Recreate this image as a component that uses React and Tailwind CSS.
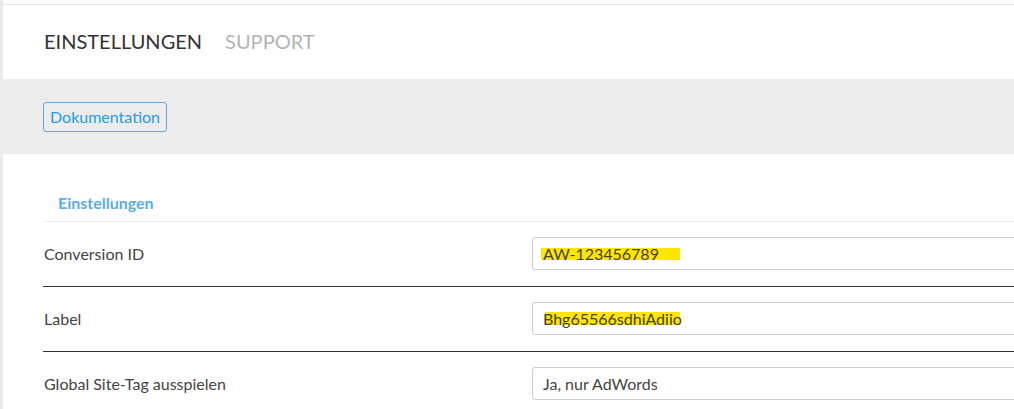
import React from "react";

const rows = [
  {
    label: "Conversion ID",
    value: "AW-123456789",
    mark: "left-[-2px] top-[3px] h-[12px] w-[139px]",
  },
  {
    label: "Label",
    value: "Bhg65566sdhiAdiio",
    mark: "left-[2px] top-[2px] h-[13px] w-[135px]",
  },
  { label: "Global Site-Tag ausspielen", value: "Ja, nur AdWords" },
];

const App = () => {
  return (
    <div
      className="w-full h-[409px] overflow-hidden bg-white flex"
      style={{ fontFamily: "Lato, 'Open Sans', sans-serif" }}
    >
      <div className="w-[3px] shrink-0 bg-[#ebebeb]" />
      <div className="flex-1 min-w-0">
        <div className="h-[4px] bg-white" />
        <div className="h-[1px] bg-[#e6e6e6]" />

        {/* tabs */}
        <div className="h-[74px] flex items-center pl-[41px] pb-[2px]">
          <span className="text-[20px] text-[#333]">EINSTELLUNGEN</span>
          <span className="ml-[23px] text-[20px] text-[#b3b3b3]">SUPPORT</span>
        </div>

        {/* toolbar */}
        <div className="h-[75px] bg-[#ececec] flex items-center pl-[40px]">
          <button className="h-[30px] px-[6px] rounded-[3px] border border-[#64a9de] text-[16px] text-[#239ee6] leading-none">
            Dokumentation
          </button>
        </div>

        {/* settings */}
        <div className="pl-[40px]">
          <div className="pt-[40px] pb-[9px] pl-[15px] border-b border-[#ebebeb]">
            <div className="text-[16px] leading-[18px] font-bold text-[#5aace6]">Einstellungen</div>
          </div>
          {rows.map((row, i) => (
            <div
              key={row.label}
              className={`h-[65px] flex items-start pt-[15px] ${i < 2 ? "border-b border-[#333]" : ""}`}
            >
              <div className="w-[489px] shrink-0 h-[33px] flex items-center pl-[1px] text-[16px] text-[#444]">
                {row.label}
              </div>
              <div className="w-[600px] shrink-0 h-[33px] flex items-center pl-[10px] border border-[#cccccc] rounded-[3px] text-[16px] text-[#444]">
                <span className="relative inline-block leading-[18px]">
                  {row.mark && (
                    <span className={`absolute bg-[#ffe500] ${row.mark}`} />
                  )}
                  <span className="relative">{row.value}</span>
                </span>
              </div>
            </div>
          ))}
        </div>
      </div>
    </div>
  );
};

export default App;
